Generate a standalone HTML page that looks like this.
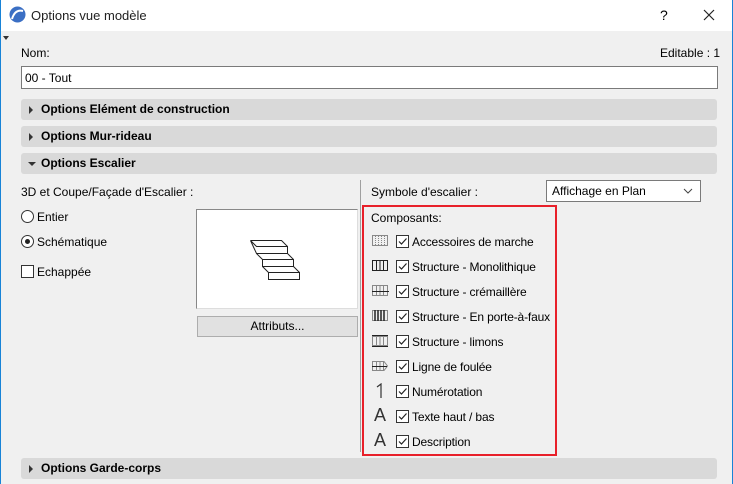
<!DOCTYPE html>
<html><head><meta charset="utf-8"><style>
*{margin:0;padding:0;box-sizing:border-box}
body{width:733px;height:484px;position:relative;background:#f0f0f0;font-family:"Liberation Sans",sans-serif;font-size:12px;color:#000;overflow:hidden}
.a{position:absolute;white-space:nowrap}
.hdr{position:absolute;left:21px;width:696px;height:21px;background:#d9d9d9;border-radius:3px;font-weight:bold;font-size:12px;line-height:21px;padding-left:20px}
.tri{position:absolute;left:8px;top:7px;width:0;height:0;border-top:4px solid transparent;border-bottom:4px solid transparent;border-left:4px solid #333}
.trid{position:absolute;left:7px;top:9px;width:0;height:0;border-left:4px solid transparent;border-right:4px solid transparent;border-top:4px solid #333}
.cb{position:absolute;width:13px;height:13px;border:1px solid #333;background:#fff}
.t{letter-spacing:-0.15px}
</style></head><body>
<div class="a" style="left:0;top:0;width:733px;height:31px;background:#fff"></div>
<div class="a" style="left:0;top:0;width:1px;height:484px;background:#1883d7"></div>
<div class="a" style="left:732px;top:0;width:1px;height:484px;background:#1883d7"></div>
<svg class="a" style="left:9px;top:6px" width="17" height="17" viewBox="0 0 17 17"><circle cx="8.5" cy="8.5" r="8" fill="#3b6fc4"/><path d="M3 13 Q6 3 14 5" stroke="#fff" stroke-width="2" fill="none"/></svg>
<div class="a" style="left:31px;top:8px;font-size:13px;color:#222">Options vue modèle</div>
<div class="a" style="left:660px;top:7px;font-size:14px">?</div>
<svg class="a" style="left:703px;top:9px" width="12" height="12"><path d="M1 1L11 11M11 1L1 11" stroke="#222" stroke-width="1.2"/></svg>
<div class="a" style="left:3px;top:36px;width:0;height:0;border-left:3px solid transparent;border-right:3px solid transparent;border-top:4px solid #333"></div>
<div class="a" style="left:21px;top:46px">Nom:</div>
<div class="a" style="left:660px;top:46px">Editable : 1</div>
<div class="a" style="left:21px;top:66px;width:697px;height:23px;background:#fff;border:1px solid #7a7a7a;padding:4px 3px">00 - Tout</div>
<div class="hdr" style="top:99px"><div class="tri"></div>Options Elément de construction</div>
<div class="hdr" style="top:126px"><div class="tri"></div>Options Mur-rideau</div>
<div class="hdr" style="top:153px"><div class="trid"></div>Options Escalier</div>
<div class="hdr" style="top:458px"><div class="tri"></div>Options Garde-corps</div>

<div class="a" style="left:21px;top:185px">3D et Coupe/Façade d'Escalier :</div>
<div class="a" style="left:21px;top:210px;width:13px;height:13px;border:1px solid #333;border-radius:50%;background:#fff"></div>
<div class="a" style="left:37px;top:210px">Entier</div>
<div class="a" style="left:21px;top:235px;width:13px;height:13px;border:1px solid #333;border-radius:50%;background:#fff"><div style="position:absolute;left:3px;top:3px;width:5px;height:5px;border-radius:50%;background:#222"></div></div>
<div class="a" style="left:37px;top:235px">Schématique</div>
<div class="cb" style="left:21px;top:265px"></div>
<div class="a" style="left:37px;top:265px">Echappée</div>
<div class="a" style="left:196px;top:209px;width:162px;height:100px;background:#fff;border-top:1px solid #888;border-left:1px solid #888;border-right:1px solid #ddd;border-bottom:1px solid #ddd"></div>
<svg class="a" style="left:249px;top:239px" width="62" height="44"><g fill="none" stroke="#222" stroke-width="1"><path d="M1.5 1.5H32.5L38.5 7.5M1.5 1.5L7.5 7.5H38.5V14.5H7.5Z"/><path d="M7.5 14.5L13.5 20.5H44.5V27.5H13.5V20.5M38.5 14.5L44.5 20.5"/><path d="M13.5 27.5L19.5 33.5H50.5V40.5H19.5V33.5M44.5 27.5L50.5 33.5"/></g></svg>
<div class="a" style="left:197px;top:316px;width:161px;height:21px;background:#e1e1e1;border:1px solid #adadad;text-align:center;line-height:19px">Attributs...</div>

<div class="a" style="left:360px;top:180px;width:1px;height:272px;background:#a0a0a0"></div>
<div class="a" style="left:371px;top:185px">Symbole d'escalier :</div>
<div class="a" style="left:546px;top:180px;width:155px;height:22px;background:#fff;border:1px solid #7a7a7a;padding:3px 5px">Affichage en Plan</div>
<svg class="a" style="left:683px;top:188px" width="10" height="6"><path d="M1 1L5 5L9 1" stroke="#444" fill="none"/></svg>
<div class="a" style="left:362px;top:205px;width:195px;height:251px;border:2px solid #e8202a"></div>
<div class="a" style="left:371px;top:211px">Composants:</div>

<div class="a" style="left:362px;top:0">
<svg class="a" style="left:10px;top:235px" width="17" height="12"><g stroke="#888" fill="none"><rect x="0.5" y="0.5" width="15" height="10"/><path d="M3.5 1V11M6.5 1V11M9.5 1V11M12.5 1V11" stroke-dasharray="1 1"/></g></svg>
<svg class="a" style="left:10px;top:260px" width="17" height="12"><g stroke="#222" fill="none"><rect x="0.5" y="0.5" width="15" height="10"/><path d="M4.5 1V11M8 1V11M11.5 1V11"/></g></svg>
<svg class="a" style="left:10px;top:285px" width="17" height="12"><g stroke="#888" fill="none"><rect x="0.5" y="0.5" width="15" height="10"/><path d="M4.5 1V11M8 1V11M11.5 1V11"/></g><path d="M0 6.5H17" stroke="#222"/></svg>
<svg class="a" style="left:10px;top:310px" width="17" height="12"><g fill="none"><rect x="0.5" y="0.5" width="15" height="10" stroke="#888"/><path d="M3 0V11M6 0V11M9 0V11M12 0V11" stroke="#222" stroke-width="1.5"/></g></svg>
<svg class="a" style="left:10px;top:335px" width="17" height="12"><g stroke="#888" fill="none"><rect x="0.5" y="1.5" width="15" height="9"/><path d="M4.5 2V10M8 2V10M11.5 2V10"/></g><path d="M0 0.5H16M0 11.5H16" stroke="#222"/></svg>
<svg class="a" style="left:10px;top:360px" width="17" height="12"><g stroke="#888" fill="none"><path d="M0.5 1.5H12L15.5 6L12 10.5H0.5Z"/><path d="M4.5 2V10M8 2V10M11.5 2V10"/></g><path d="M0 6.5H15" stroke="#222"/></svg>
<svg class="a" style="left:14px;top:383px" width="10" height="16"><path d="M1 4L5 1V15" stroke="#333" fill="none" stroke-width="1.2"/></svg>
<div class="a" style="left:12px;top:405px;font-size:18px;color:#333">A</div>
<div class="a" style="left:12px;top:430px;font-size:18px;color:#333">A</div>
</div>

<div class="a" style="left:396px;top:235px"><div class="cb" style="left:0;top:0"><svg width="11" height="11" style="position:absolute;left:0;top:0"><path d="M2 5.5L4.5 8L9.5 2.5" stroke="#222" fill="none" stroke-width="1.2"/></svg></div><div class="a t" style="left:16px;top:0">Accessoires de marche</div></div>
<div class="a" style="left:396px;top:260px"><div class="cb" style="left:0;top:0"><svg width="11" height="11" style="position:absolute;left:0;top:0"><path d="M2 5.5L4.5 8L9.5 2.5" stroke="#222" fill="none" stroke-width="1.2"/></svg></div><div class="a t" style="left:16px;top:0">Structure - Monolithique</div></div>
<div class="a" style="left:396px;top:285px"><div class="cb" style="left:0;top:0"><svg width="11" height="11" style="position:absolute;left:0;top:0"><path d="M2 5.5L4.5 8L9.5 2.5" stroke="#222" fill="none" stroke-width="1.2"/></svg></div><div class="a t" style="left:16px;top:0">Structure - crémaillère</div></div>
<div class="a" style="left:396px;top:310px"><div class="cb" style="left:0;top:0"><svg width="11" height="11" style="position:absolute;left:0;top:0"><path d="M2 5.5L4.5 8L9.5 2.5" stroke="#222" fill="none" stroke-width="1.2"/></svg></div><div class="a t" style="left:16px;top:0">Structure - En porte-à-faux</div></div>
<div class="a" style="left:396px;top:335px"><div class="cb" style="left:0;top:0"><svg width="11" height="11" style="position:absolute;left:0;top:0"><path d="M2 5.5L4.5 8L9.5 2.5" stroke="#222" fill="none" stroke-width="1.2"/></svg></div><div class="a t" style="left:16px;top:0">Structure - limons</div></div>
<div class="a" style="left:396px;top:360px"><div class="cb" style="left:0;top:0"><svg width="11" height="11" style="position:absolute;left:0;top:0"><path d="M2 5.5L4.5 8L9.5 2.5" stroke="#222" fill="none" stroke-width="1.2"/></svg></div><div class="a t" style="left:16px;top:0">Ligne de foulée</div></div>
<div class="a" style="left:396px;top:385px"><div class="cb" style="left:0;top:0"><svg width="11" height="11" style="position:absolute;left:0;top:0"><path d="M2 5.5L4.5 8L9.5 2.5" stroke="#222" fill="none" stroke-width="1.2"/></svg></div><div class="a t" style="left:16px;top:0">Numérotation</div></div>
<div class="a" style="left:396px;top:410px"><div class="cb" style="left:0;top:0"><svg width="11" height="11" style="position:absolute;left:0;top:0"><path d="M2 5.5L4.5 8L9.5 2.5" stroke="#222" fill="none" stroke-width="1.2"/></svg></div><div class="a t" style="left:16px;top:0">Texte haut / bas</div></div>
<div class="a" style="left:396px;top:435px"><div class="cb" style="left:0;top:0"><svg width="11" height="11" style="position:absolute;left:0;top:0"><path d="M2 5.5L4.5 8L9.5 2.5" stroke="#222" fill="none" stroke-width="1.2"/></svg></div><div class="a t" style="left:16px;top:0">Description</div></div>
</body></html>
